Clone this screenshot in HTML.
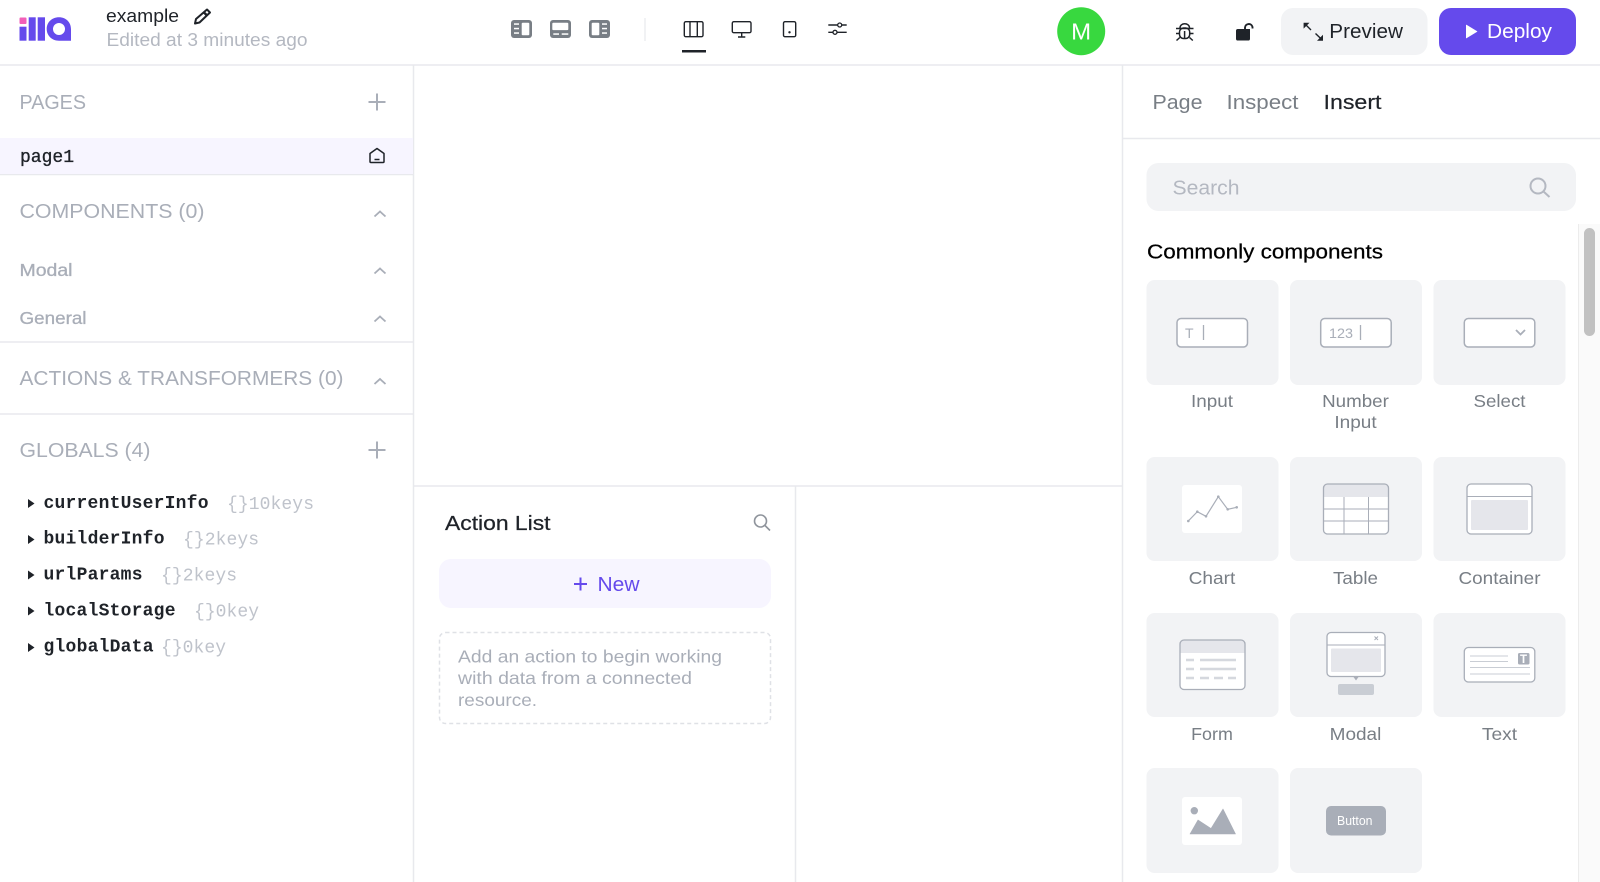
<!DOCTYPE html>
<html lang="en">
<head>
<meta charset="utf-8">
<title>example</title>
<style>
html,body{margin:0;padding:0;background:#fff;width:1600px;height:882px;overflow:hidden}
svg{display:block}
text{font-family:"Liberation Sans",sans-serif;font-size:17.5px;fill:#787e85;white-space:pre}
.h{font-size:20px;fill:#a9aeb8}
.m{font-size:20px;fill:#1f2329;stroke:#1f2329;stroke-width:.25px}
.g{fill:#a9aeb8}
.s{fill:#a9aeb8;stroke:#a9aeb8;stroke-width:.3px}
.c{font-family:"Liberation Mono",monospace;font-size:18px;font-weight:700;fill:#1f2329}
.k{font-family:"Liberation Mono",monospace;font-size:18px;fill:#bfc3cb}
.l{text-anchor:middle}
.dv{stroke:#e8e9ed;stroke-width:1.5;fill:none}
</style>
</head>
<body>
<svg width="1600" height="882" viewBox="0 0 1600 882" xmlns="http://www.w3.org/2000/svg">
<rect width="1600" height="882" fill="#fff"/>

<!-- dividers -->
<path class="dv" d="M0 65H1600M413.500 65V882M1122.500 65V882M414 486H1122M795.500 486V882M1123 138.500H1600M0 174.500H413M0 342H413M0 414H413"/>

<!-- logo -->
<g fill="#654aec">
<rect x="19.500" y="17.500" width="7" height="6.500" fill="#f25fb8" rx="1"/>
<rect x="19.500" y="26.700" width="7" height="14"/>
<rect x="28.700" y="17.300" width="7" height="23.400"/>
<rect x="37.700" y="17.300" width="7.300" height="23.400"/>
<path fill-rule="evenodd" d="M59 17.300C66 17.300 71 22.300 71 29.300V40.700H59C52 40.700 46.700 35.700 46.700 29S52 17.300 59 17.300ZM59 23A6 6 0 1 0 59 35A6 6 0 1 0 59 23Z"/>
</g>

<!-- title -->
<text x="106" y="22" textLength="73" lengthAdjust="spacingAndGlyphs" style="font-size:18px;fill:#1f2329">example</text>
<text x="106.500" y="46" textLength="201" lengthAdjust="spacingAndGlyphs" style="font-size:18px;fill:#b4b8c1">Edited at 3 minutes ago</text>
<g fill="none" stroke="#1f2329" stroke-width="2" stroke-linejoin="round">
<path d="M207 9.500L210 12.500L199.500 22.500L195 23.500L196 19Z"/><path d="M204 12.500L207 15.500" stroke-width="2.500"/>
</g>

<!-- layout icons -->
<g fill="#787e85">
<rect x="511" y="20" width="21" height="18" rx="3"/><rect x="550" y="20" width="21" height="18" rx="3"/><rect x="589" y="20" width="21" height="18" rx="3"/>
</g>
<g fill="#fff">
<rect x="521.700" y="22.700" width="7.600" height="12.600" rx="1"/>
<rect x="514" y="23.300" width="5" height="1.500"/><rect x="514" y="27.800" width="5" height="1.500"/><rect x="514" y="32.300" width="5" height="1.500"/>
<rect x="552.300" y="22.700" width="16" height="7.400" rx="1"/>
<rect x="553.300" y="33.300" width="5.700" height="1.500"/><rect x="561.700" y="33.300" width="6.600" height="1.500"/>
<rect x="591.700" y="22.700" width="7.600" height="12.600" rx="1"/>
<rect x="602" y="23.300" width="5" height="1.500"/><rect x="602" y="27.800" width="5" height="1.500"/><rect x="602" y="32.300" width="5" height="1.500"/>
</g>
<path d="M645 18V41" stroke="#eceef1" stroke-width="1.500"/>

<!-- view icons -->
<g fill="none" stroke="#1f2329" stroke-width="1.400">
<rect x="684.300" y="21.700" width="18.700" height="15" rx="1.500"/>
<path d="M690 21.700V36.700M697.300 21.700V36.700"/>
<rect x="732.300" y="21.700" width="18.700" height="11" rx="1.500"/>
<path d="M741.700 33V37M738 37H745.300"/>
<rect x="783.500" y="21.700" width="12.200" height="15" rx="1.500"/>
<path d="M828.300 25H846.700M828.300 32.300H846.700"/>
</g>
<circle cx="789.500" cy="32.300" r="1.200" fill="#1f2329"/>
<circle cx="839.700" cy="25" r="2" fill="#fff" stroke="#1f2329" stroke-width="1.300"/>
<circle cx="835" cy="32.300" r="2" fill="#fff" stroke="#1f2329" stroke-width="1.300"/>
<rect x="682" y="50" width="24" height="2.500" fill="#1f2329"/>

<!-- avatar -->
<circle cx="1081.200" cy="31.200" r="24" fill="#38d83f"/>
<text class="l" x="1081.200" y="39.300" textLength="20" lengthAdjust="spacingAndGlyphs" style="font-size:23px;fill:#fff">M</text>

<!-- bug -->
<g fill="none" stroke="#1f2329" stroke-width="1.500" stroke-linejoin="round">
<path d="M1180 28C1180 22.300 1189.500 22.300 1189.500 28"/>
<rect x="1179.500" y="28" width="10.200" height="10.500" rx="4"/>
<path d="M1184.600 31V38.500M1176 28.500H1193.500M1176 33.500H1179.500M1189.700 33.500H1193.500M1179.800 37.500L1176.500 40.500M1189.500 37.500L1192.800 40.500"/>
</g>

<!-- lock -->
<path d="M1250 29H1237.800A1.800 1.800 0 0 0 1236 30.800V38.700A1.800 1.800 0 0 0 1237.800 40.500H1248.200A1.800 1.800 0 0 0 1250 38.700Z" fill="#1f2329"/>
<path d="M1245 29V27.500A3.800 3.800 0 0 1 1252.500 27V28.500" fill="none" stroke="#1f2329" stroke-width="1.900"/>

<!-- preview -->
<rect x="1281" y="8" width="146.500" height="47" rx="12" fill="#f2f3f5"/>
<g fill="#1f2329" stroke="none">
<path d="M1303.600 22.700H1309.500L1303.600 28.600Z"/>
<path d="M1323 40.700H1317L1323 34.700Z"/>
</g>
<path d="M1305 24L1311 30M1321.500 39.300L1315.500 33.500" stroke="#1f2329" stroke-width="1.400"/>
<text x="1329.300" y="38" textLength="73.600" lengthAdjust="spacingAndGlyphs" style="font-size:20px;fill:#1f2329">Preview</text>

<!-- deploy -->
<rect x="1439" y="8" width="137" height="47" rx="12" fill="#654aec"/>
<path d="M1466.300 25L1477 31.500L1466.300 38Z" fill="#fff" stroke="#fff" stroke-width=".6" stroke-linejoin="round"/>
<text x="1487" y="38" textLength="65" lengthAdjust="spacingAndGlyphs" style="font-size:20px;fill:#fff">Deploy</text>

<!-- left panel -->
<text class="h" x="19.500" y="109" textLength="66.500" lengthAdjust="spacingAndGlyphs">PAGES</text>
<path d="M377 93.500V110.500M368.500 102H385.500" stroke="#a9aeb8" stroke-width="2"/>
<rect x="0" y="138" width="413" height="36" fill="#f7f5ff"/>
<text class="c" x="20" y="162" textLength="54" style="font-weight:400;stroke:#1f2329;stroke-width:.35px">page1</text>
<path d="M370 153.500L377 148.500L384 153.500V161.500A1 1 0 0 1 383 162.500H371A1 1 0 0 1 370 161.500Z" fill="none" stroke="#1f2329" stroke-width="1.500" stroke-linejoin="round"/>
<path d="M374.500 159.500H379.500" stroke="#1f2329" stroke-width="1.500"/>

<text class="h" x="19.500" y="218" textLength="185" lengthAdjust="spacingAndGlyphs">COMPONENTS (0)</text>
<text class="s" x="19.500" y="276" textLength="53" lengthAdjust="spacingAndGlyphs">Modal</text>
<text class="s" x="19.500" y="324" textLength="67" lengthAdjust="spacingAndGlyphs">General</text>
<text class="h" x="19.500" y="385" textLength="324" lengthAdjust="spacingAndGlyphs">ACTIONS &amp; TRANSFORMERS (0)</text>
<text class="h" x="19.500" y="457" textLength="131" lengthAdjust="spacingAndGlyphs">GLOBALS (4)</text>
<g fill="none" stroke="#a9aeb8" stroke-width="1.800">
<path d="M374.500 216.500L380 211.500L385.500 216.500M374.500 273.500L380 268.500L385.500 273.500M374.500 321.500L380 316.500L385.500 321.500M374.500 384L380 379L385.500 384"/>
</g>
<path d="M377 441.500V458.500M368.500 450H385.500" stroke="#a9aeb8" stroke-width="2"/>

<!-- tree -->
<g fill="#1f2329">
<path d="M28 499L34.500 503.500L28 508Z"/>
<path d="M28 535L34.500 539.500L28 544Z"/>
<path d="M28 570.500L34.500 575L28 579.500Z"/>
<path d="M28 606.500L34.500 611L28 615.500Z"/>
<path d="M28 643L34.500 647.500L28 652Z"/>
</g>
<text class="c" x="43.500" y="508" textLength="165">currentUserInfo</text><text class="k" x="227" y="509" textLength="87">{}10keys</text>
<text class="c" x="43.500" y="543.500" textLength="121">builderInfo</text><text class="k" x="183" y="544.500" textLength="76">{}2keys</text>
<text class="c" x="43.500" y="579.500" textLength="99">urlParams</text><text class="k" x="161" y="580.500" textLength="76">{}2keys</text>
<text class="c" x="43.500" y="615.500" textLength="132">localStorage</text><text class="k" x="194" y="616.500" textLength="65">{}0key</text>
<text class="c" x="43.500" y="651.500" textLength="110">globalData</text><text class="k" x="161" y="652.500" textLength="65">{}0key</text>

<!-- action list -->
<text class="m" x="445" y="530" textLength="105.500" lengthAdjust="spacingAndGlyphs">Action List</text>
<circle cx="760.500" cy="521" r="6" fill="none" stroke="#8f949c" stroke-width="1.600"/>
<path d="M765 525.500L770 530.500" stroke="#8f949c" stroke-width="1.600"/>
<rect x="439" y="559" width="332" height="49" rx="12" fill="#f7f5ff"/>
<path d="M574 584H587M580.500 577.500V590.500" stroke="#654aec" stroke-width="2"/>
<text x="597.500" y="591" textLength="42" lengthAdjust="spacingAndGlyphs" style="font-size:20px;fill:#654aec">New</text>
<rect x="439.500" y="632.500" width="331" height="91" rx="6" fill="none" stroke="#dfe1e6" stroke-width="1.500" stroke-dasharray="4 3"/>
<text class="g" x="458" y="662.500" textLength="264" lengthAdjust="spacingAndGlyphs">Add an action to begin working</text>
<text class="g" x="458" y="684" textLength="234" lengthAdjust="spacingAndGlyphs">with data from a connected</text>
<text class="g" x="458" y="706" textLength="79" lengthAdjust="spacingAndGlyphs">resource.</text>

<!-- right panel -->
<text x="1152.500" y="109" textLength="50" lengthAdjust="spacingAndGlyphs" style="font-size:20px">Page</text>
<text x="1226.500" y="109" textLength="72" lengthAdjust="spacingAndGlyphs" style="font-size:20px">Inspect</text>
<text x="1323.500" y="109" textLength="58" lengthAdjust="spacingAndGlyphs" style="font-size:20px;fill:#1f2329;stroke:#1f2329;stroke-width:.2px">Insert</text>

<rect x="1146.500" y="163" width="429.500" height="48" rx="12" fill="#f2f3f5"/>
<text x="1172.500" y="194.500" textLength="67" lengthAdjust="spacingAndGlyphs" style="font-size:20px;fill:#b4b8c1">Search</text>
<circle cx="1538" cy="186" r="7.500" fill="none" stroke="#b4b8c1" stroke-width="2"/>
<path d="M1543.500 191.500L1549.500 197" stroke="#b4b8c1" stroke-width="2"/>

<text class="m" x="1147" y="258.500" textLength="236" lengthAdjust="spacingAndGlyphs" style="stroke:#000;fill:#000">Commonly components</text>

<!-- scrollbar -->
<rect x="1578" y="224" width="22" height="658" fill="#fafafa"/>
<path d="M1578.500 224V882" stroke="#ececec"/>
<rect x="1584" y="228" width="11" height="108" rx="5.500" fill="#c1c1c1"/>

<!-- tiles -->
<g fill="#f2f3f5">
<rect x="1146.500" y="280" width="132" height="105" rx="8"/><rect x="1290" y="280" width="132" height="105" rx="8"/><rect x="1433.500" y="280" width="132" height="105" rx="8"/>
<rect x="1146.500" y="457" width="132" height="104" rx="8"/><rect x="1290" y="457" width="132" height="104" rx="8"/><rect x="1433.500" y="457" width="132" height="104" rx="8"/>
<rect x="1146.500" y="613" width="132" height="104" rx="8"/><rect x="1290" y="613" width="132" height="104" rx="8"/><rect x="1433.500" y="613" width="132" height="104" rx="8"/>
<rect x="1146.500" y="768" width="132" height="105" rx="8"/><rect x="1290" y="768" width="132" height="105" rx="8"/>
</g>

<!-- input -->
<rect x="1177" y="318.500" width="70.500" height="28.500" rx="4" fill="#fff" stroke="#a9aeb8" stroke-width="1.500"/>
<text class="g" x="1185" y="338" style="font-size:14px">T</text>
<path d="M1203.500 325V340" stroke="#a9aeb8" stroke-width="1.300"/>
<text class="l" x="1212" y="407" textLength="42" lengthAdjust="spacingAndGlyphs">Input</text>

<!-- number -->
<rect x="1320.700" y="318.500" width="70.500" height="28.500" rx="4" fill="#fff" stroke="#a9aeb8" stroke-width="1.500"/>
<text class="g" x="1329" y="338" textLength="24" lengthAdjust="spacingAndGlyphs" style="font-size:14px">123</text>
<path d="M1360.500 325V340" stroke="#a9aeb8" stroke-width="1.300"/>
<text class="l" x="1355.500" y="407" textLength="66.700" lengthAdjust="spacingAndGlyphs">Number</text>
<text class="l" x="1355.500" y="428" textLength="42.300" lengthAdjust="spacingAndGlyphs">Input</text>

<!-- select -->
<rect x="1464.300" y="318.500" width="70.500" height="28.500" rx="4" fill="#fff" stroke="#a9aeb8" stroke-width="1.500"/>
<path d="M1516 330L1520.500 334.500L1525 330" fill="none" stroke="#a9aeb8" stroke-width="1.800"/>
<text class="l" x="1499.500" y="407" textLength="52" lengthAdjust="spacingAndGlyphs">Select</text>

<!-- chart -->
<rect x="1182" y="485" width="60" height="48" rx="3" fill="#fff"/>
<path d="M1188.300 521L1197.300 511.700L1206 516.300L1218.300 496.700L1227.700 509.300L1236.700 507.300" fill="none" stroke="#a9aeb8" stroke-width="1.200"/>
<g fill="#a9aeb8"><circle cx="1188.300" cy="521" r="1.300"/><circle cx="1197.300" cy="511.700" r="1.300"/><circle cx="1206" cy="516.300" r="1.300"/><circle cx="1218.300" cy="496.700" r="1.300"/><circle cx="1227.700" cy="509.300" r="1.300"/><circle cx="1236.700" cy="507.300" r="1.300"/></g>
<text class="l" x="1212" y="584" textLength="46.700" lengthAdjust="spacingAndGlyphs">Chart</text>

<!-- table -->
<rect x="1323.500" y="484" width="65" height="50" rx="4" fill="#fff"/>
<path d="M1323.500 497V488A4 4 0 0 1 1327.500 484H1384.500A4 4 0 0 1 1388.500 488V497Z" fill="#e5e6eb"/>
<rect x="1323.500" y="484" width="65" height="50" rx="4" fill="none" stroke="#a9aeb8" stroke-width="1.300"/>
<path d="M1344 497V534M1368.500 497V534M1323.500 509H1388.500M1323.500 521H1388.500" stroke="#a9aeb8" stroke-width="1"/>
<text class="l" x="1355.500" y="584" textLength="45" lengthAdjust="spacingAndGlyphs">Table</text>

<!-- container -->
<rect x="1467" y="484" width="65" height="50" rx="4" fill="#fff" stroke="#a9aeb8" stroke-width="1.300"/>
<path d="M1467 496.500H1532" stroke="#a9aeb8" stroke-width="1"/>
<rect x="1471" y="500" width="57" height="30" rx="1" fill="#e5e6eb"/>
<text class="l" x="1499.500" y="584" textLength="82" lengthAdjust="spacingAndGlyphs">Container</text>

<!-- form -->
<rect x="1180" y="640" width="65" height="49.500" rx="4" fill="#fff"/>
<path d="M1180 653V644A4 4 0 0 1 1184 640H1241A4 4 0 0 1 1245 644V653Z" fill="#e5e6eb"/>
<rect x="1180" y="640" width="65" height="49.500" rx="4" fill="none" stroke="#a9aeb8" stroke-width="1.300"/>
<path d="M1186 660H1194M1200 660H1236M1186 669H1194M1200 669H1236M1186 678H1194M1200 678H1209M1214 678H1223M1228 678H1236" stroke="#d5d8de" stroke-width="2.500"/>
<text class="l" x="1212" y="740" textLength="41.700" lengthAdjust="spacingAndGlyphs">Form</text>

<!-- modal -->
<rect x="1327" y="632.500" width="58" height="44" rx="4" fill="#fff" stroke="#a9aeb8" stroke-width="1.300"/>
<path d="M1327 645H1385" stroke="#a9aeb8" stroke-width="1"/>
<rect x="1331" y="648.500" width="50" height="23.500" rx="1" fill="#e5e6eb"/>
<path d="M1353.500 677H1358.500L1356 680.500Z" fill="#a9aeb8"/>
<path d="M1374.500 636.500L1378 640M1378 636.500L1374.500 640" stroke="#a9aeb8" stroke-width="1"/>
<rect x="1338" y="684" width="36" height="11" rx="2" fill="#c9cdd4"/>
<text class="l" x="1355.500" y="740" textLength="51.700" lengthAdjust="spacingAndGlyphs">Modal</text>

<!-- text -->
<rect x="1464.300" y="647.500" width="70.500" height="34.500" rx="4" fill="#fff" stroke="#a9aeb8" stroke-width="1.300"/>
<path d="M1470 656H1508M1470 661.500H1508M1470 667.500H1530M1470 674H1530" stroke="#c9cdd4" stroke-width=".9"/>
<rect x="1518" y="653" width="11.500" height="11.500" rx="1.500" fill="#a9aeb8"/>
<text x="1520" y="663" style="font-size:11.500px;fill:#fff;font-weight:700">T</text>
<text class="l" x="1499.500" y="740" textLength="35.300" lengthAdjust="spacingAndGlyphs">Text</text>

<!-- image -->
<rect x="1182" y="797" width="60" height="48" rx="3" fill="#fff"/>
<circle cx="1194.300" cy="810.700" r="3.700" fill="#a9aeb8"/>
<path d="M1190 834L1198 820L1211 828.500L1223 809L1235.500 834Z" fill="#a9aeb8" stroke="#a9aeb8" stroke-width=".6" stroke-linejoin="round"/>

<!-- button -->
<rect x="1326" y="806" width="60" height="29.500" rx="5" fill="#a9aeb8"/>
<text x="1337" y="825" textLength="35.500" lengthAdjust="spacingAndGlyphs" style="font-size:12.500px;fill:#fff">Button</text>
</svg>
</body>
</html>
